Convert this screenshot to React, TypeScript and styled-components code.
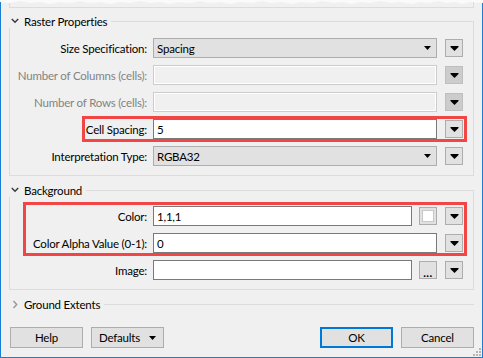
import React from 'react';
import styled, { createGlobalStyle } from 'styled-components';

const GlobalStyle = createGlobalStyle`
    html, body {
        margin: 0;
        padding: 0;
        background: #f0f0f0;
    }
    body {
        width: 483px;
        height: 358px;
        overflow: hidden;
        font-family: Lato, "Noto Sans", sans-serif;
        font-size: 11.5px;
        letter-spacing: -0.2px;
        color: #000;
    }
    * {
        box-sizing: border-box;
    }
`;

const Window = styled.div`
    position: relative;
    width: 483px;
    height: 358px;
    display: flex;
    flex-direction: column;
    padding: 0 8px 9px 8px;
    background: #f0f0f0;
    border: 1px solid #1a7fd4;
    border-top: none;
`;

const Tear = styled.svg`
    position: absolute;
    top: 0;
    left: -1px;
`;

const PrevGroup = styled.div`
    height: 8px;
    border: 1px solid #dcdcdc;
    border-top: none;
`;

const GroupHeader = styled.div<{ $gap: number }>`
    display: flex;
    align-items: center;
    height: 14px;
    margin-top: ${(p) => p.$gap}px;
`;

const Chevron = styled.span`
    width: 15px;
    height: 14px;
    display: flex;
    align-items: center;
    padding-left: 2px;
`;

const Title = styled.span`
    padding-right: 4px;
    white-space: nowrap;
`;

const Rule = styled.div<{ $open: boolean }>`
    flex: 1;
    align-self: flex-end;
    height: 7px;
    border-top: 1px solid #dcdcdc;
    border-right: ${(p) => (p.$open ? '1px solid #dcdcdc' : 'none')};
`;

const GroupBody = styled.div<{ $top: number }>`
    display: flex;
    flex-direction: column;
    gap: 7px;
    padding: ${(p) => p.$top}px 10px 9px 0;
    border: 1px solid #dcdcdc;
    border-top: none;
`;

const Row = styled.div`
    display: flex;
    align-items: center;
    height: 20px;
`;

const Label = styled.label<{ $disabled?: boolean }>`
    width: 137px;
    margin-right: 6px;
    text-align: right;
    white-space: nowrap;
    color: ${(p) => (p.$disabled ? '#838383' : '#000')};
`;

const Field = styled.div<{ $kind: 'text' | 'combo' | 'disabled' }>`
    flex: 1;
    height: 20px;
    display: flex;
    align-items: center;
    justify-content: space-between;
    padding: 0 5px 0 3px;
    margin-right: 8px;
    white-space: nowrap;
    background: ${(p) => (p.$kind === 'text' ? '#fff' : p.$kind === 'combo' ? '#e1e1e1' : '#f0f0f0')};
    border: 1px solid ${(p) => (p.$kind === 'text' ? '#7a7a7a' : p.$kind === 'combo' ? '#adadad' : '#cccccc')};
    box-shadow: ${(p) => (p.$kind === 'disabled' ? 'inset 0 0 0 1px #fff' : 'none')};
`;

const SmallButton = styled.div<{ $disabled?: boolean }>`
    flex: none;
    width: 18px;
    height: 18px;
    display: flex;
    align-items: center;
    justify-content: center;
    background: ${(p) => (p.$disabled ? '#cccccc' : '#e1e1e1')};
    border: 1px solid ${(p) => (p.$disabled ? '#bfbfbf' : '#adadad')};
`;

const ExtraButton = styled(SmallButton)`
    margin-right: 8px;
    margin-left: -1px;
`;

const Swatch = styled.div`
    width: 12px;
    height: 12px;
    background: #fff;
    border: 1px solid #c9c9c9;
`;

const Dots = styled.span`
    align-self: flex-end;
    line-height: 10px;
    font-weight: 700;
    letter-spacing: 0.5px;
`;

const Highlight = styled.div<{ $left: number; $top: number }>`
    position: relative;
    display: flex;
    flex-direction: column;
    gap: 7px;

    &::after {
        content: '';
        position: absolute;
        top: -${(p) => p.$top}px;
        bottom: -3px;
        right: -4px;
        left: ${(p) => p.$left}px;
        border: 3px solid #f24646;
        pointer-events: none;
    }
`;

const Footer = styled.div`
    display: flex;
    gap: 8px;
    margin-top: auto;
    padding-left: 1px;
`;

const Button = styled.div<{ $primary?: boolean }>`
    width: 73px;
    height: 21px;
    display: flex;
    align-items: center;
    justify-content: center;
    gap: 9px;
    background: #e1e1e1;
    border: ${(p) => (p.$primary ? '2px solid #0078d7' : '1px solid #adadad')};
`;

const Spacer = styled.div`
    flex: 1;
`;

const Grip = styled.svg`
    position: absolute;
    right: 1px;
    bottom: 1px;
`;

const Arrow = ({ size = 'big' }: { size?: 'big' | 'small' }) =>
    size === 'big' ? (
        <svg width="9" height="5" viewBox="0 0 9 5">
            <path d="M0.5 0H8.5V1L4.5 5L0.5 1Z" fill="#000" />
        </svg>
    ) : (
        <svg width="7" height="4" viewBox="0 0 7 4">
            <path d="M0 0H7L3.5 4Z" fill="#000" />
        </svg>
    );

const ChevronDown = () => (
    <svg width="8" height="6" viewBox="0 0 8 6">
        <path d="M0.8 1L4 4.2L7.2 1" fill="none" stroke="#3c3c3c" strokeWidth="1.5" />
    </svg>
);

const ChevronRight = () => (
    <svg width="8" height="9" viewBox="0 0 8 9">
        <path d="M2.5 1L5.7 4.5L2.5 8" fill="none" stroke="#9a9a9a" strokeWidth="1.5" />
    </svg>
);

const tearPoints =
    '0,0 483,0 483,3 470,2 462,4 455,2 446,3 438,1 430,3 420,2 412,4 400,2 392,3 380,1 370,3 360,2 352,4 342,2 334,3 322,1 314,3 300,2 292,4 282,2 270,3 262,1 252,3 240,2 230,4 220,2 210,3 200,1 190,3 178,2 170,4 160,2 150,3 140,1 130,3 120,2 110,4 100,2 90,3 80,1 70,3 60,2 50,4 40,2 30,3 20,1 10,3 0,2';

const App = () => {
    return (
        <Window>
            <GlobalStyle />
            <Tear width="483" height="6">
                <polygon points={tearPoints} fill="#fafafa" />
            </Tear>
            <PrevGroup />

            <GroupHeader $gap={6}>
                <Chevron>
                    <ChevronDown />
                </Chevron>
                <Title>Raster Properties</Title>
                <Rule $open />
            </GroupHeader>
            <GroupBody $top={10}>
                <Row>
                    <Label>Size Specification:</Label>
                    <Field $kind="combo">
                        Spacing
                        <Arrow size="small" />
                    </Field>
                    <SmallButton>
                        <Arrow />
                    </SmallButton>
                </Row>
                <Row>
                    <Label $disabled>Number of Columns (cells):</Label>
                    <Field $kind="disabled" />
                    <SmallButton $disabled>
                        <Arrow />
                    </SmallButton>
                </Row>
                <Row>
                    <Label $disabled>Number of Rows (cells):</Label>
                    <Field $kind="disabled" />
                    <SmallButton $disabled>
                        <Arrow />
                    </SmallButton>
                </Row>
                <Highlight $left={72} $top={3}>
                    <Row>
                        <Label>Cell Spacing:</Label>
                        <Field $kind="text">5</Field>
                        <SmallButton>
                            <Arrow />
                        </SmallButton>
                    </Row>
                </Highlight>
                <Row>
                    <Label>Interpretation Type:</Label>
                    <Field $kind="combo">
                        RGBA32
                        <Arrow size="small" />
                    </Field>
                    <SmallButton>
                        <Arrow />
                    </SmallButton>
                </Row>
            </GroupBody>

            <GroupHeader $gap={7}>
                <Chevron>
                    <ChevronDown />
                </Chevron>
                <Title>Background</Title>
                <Rule $open />
            </GroupHeader>
            <GroupBody $top={9}>
                <Highlight $left={13} $top={4}>
                    <Row>
                        <Label>Color:</Label>
                        <Field $kind="text">1,1,1</Field>
                        <ExtraButton>
                            <Swatch />
                        </ExtraButton>
                        <SmallButton>
                            <Arrow />
                        </SmallButton>
                    </Row>
                    <Row>
                        <Label>Color Alpha Value (0-1):</Label>
                        <Field $kind="text">0</Field>
                        <SmallButton>
                            <Arrow />
                        </SmallButton>
                    </Row>
                </Highlight>
                <Row>
                    <Label>Image:</Label>
                    <Field $kind="text" />
                    <ExtraButton>
                        <Dots>...</Dots>
                    </ExtraButton>
                    <SmallButton>
                        <Arrow />
                    </SmallButton>
                </Row>
            </GroupBody>

            <GroupHeader $gap={7}>
                <Chevron>
                    <ChevronRight />
                </Chevron>
                <Title>Ground Extents</Title>
                <Rule $open={false} />
            </GroupHeader>

            <Footer>
                <Button>Help</Button>
                <Button>
                    Defaults
                    <Arrow size="small" />
                </Button>
                <Spacer />
                <Button $primary>OK</Button>
                <Button>Cancel</Button>
            </Footer>

            <Grip width="8" height="8" viewBox="0 0 8 8">
                <g fill="#b5b5b5">
                    <rect x="6" y="0" width="2" height="2" />
                    <rect x="3" y="3" width="2" height="2" />
                    <rect x="6" y="3" width="2" height="2" />
                    <rect x="0" y="6" width="2" height="2" />
                    <rect x="3" y="6" width="2" height="2" />
                    <rect x="6" y="6" width="2" height="2" />
                </g>
            </Grip>
        </Window>
    );
};

export default App;
